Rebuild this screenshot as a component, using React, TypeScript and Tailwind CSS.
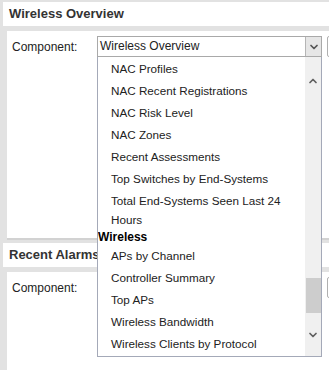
import { ChevronDown, ChevronUp } from "lucide-react";

const items: { label: string; group?: boolean }[] = [
  { label: "NAC Profiles" },
  { label: "NAC Recent Registrations" },
  { label: "NAC Risk Level" },
  { label: "NAC Zones" },
  { label: "Recent Assessments" },
  { label: "Top Switches by End-Systems" },
  { label: "Total End-Systems Seen Last 24 Hours" },
  { label: "Wireless", group: true },
  { label: "APs by Channel" },
  { label: "Controller Summary" },
  { label: "Top APs" },
  { label: "Wireless Bandwidth" },
  { label: "Wireless Clients by Protocol" },
];

function Panel({ title, height, select }: { title: string; height: number; select?: string }) {
  return (
    <section className="pl-[3px]">
      <header className="h-[24px] bg-white flex items-center pl-[6px] text-[13px] font-bold text-[#333]">
        {title}
      </header>
      <div
        className="mt-[5px] ml-[4px] bg-white border-b-[2px] border-[#d2d2d2]"
        style={{ height }}
      >
        <div className="flex items-center pt-[5px] pl-[5px]">
          <span className="w-[85px] shrink-0 text-[12px] text-[#222]">Component:</span>
          <div className="flex h-[21px] w-[225px] shrink-0 border border-[#a9a9a9] bg-white">
            <span className="flex-1 pl-[2px] text-[12px] leading-[19px] text-[#222]">{select}</span>
            <span className="flex w-[16px] items-center justify-center border-l border-[#b5b5b5] bg-[#e6e6e6]">
              <ChevronDown size={12} strokeWidth={3.5} className="text-[#555]" />
            </span>
          </div>
          <div className="ml-[5px] h-[21px] w-[20px] shrink-0 rounded-[2px] border border-[#b0b0b0] bg-white" />
        </div>
      </div>
    </section>
  );
}

export default function App() {
  return (
    <div
      className="relative h-[370px] w-[329px] overflow-hidden bg-[#e2e2e2] pt-[2px]"
      style={{ fontFamily: "Tahoma, 'Liberation Sans', Arial, sans-serif" }}
    >
      <Panel title="Wireless Overview" height={209} select="Wireless Overview" />
      <div className="h-[3px]" />
      <Panel title="Recent Alarms" height={120} />

      {/* open dropdown list */}
      <div className="absolute left-[97px] top-[57px] flex h-[300px] w-[225px] border border-t-0 border-[#a4a9b8] bg-white text-[11.7px] text-[#222]">
        <ul className="flex-1 overflow-hidden">
          {items.map((it) =>
            it.group ? (
              <li key={it.label} className="pl-0 text-[12px] leading-[14px] font-bold text-black">
                {it.label}
              </li>
            ) : (
              <li key={it.label} className="py-[1.5px] pl-[13px] pr-[6px] leading-[19px]">
                {it.label}
              </li>
            )
          )}
        </ul>
        <div className="flex w-[16px] flex-col items-center bg-[#f0f0f0]">
          <div className="flex h-[44px] items-end justify-center pb-[14px]">
            <ChevronUp size={12} strokeWidth={3.5} className="text-[#606060]" />
          </div>
          <div className="mt-[177px] h-[35px] w-[15px] bg-[#cdcdcd]" />
          <div className="flex flex-1 items-center justify-center">
            <ChevronDown size={12} strokeWidth={3.5} className="text-[#606060]" />
          </div>
        </div>
      </div>
    </div>
  );
}
